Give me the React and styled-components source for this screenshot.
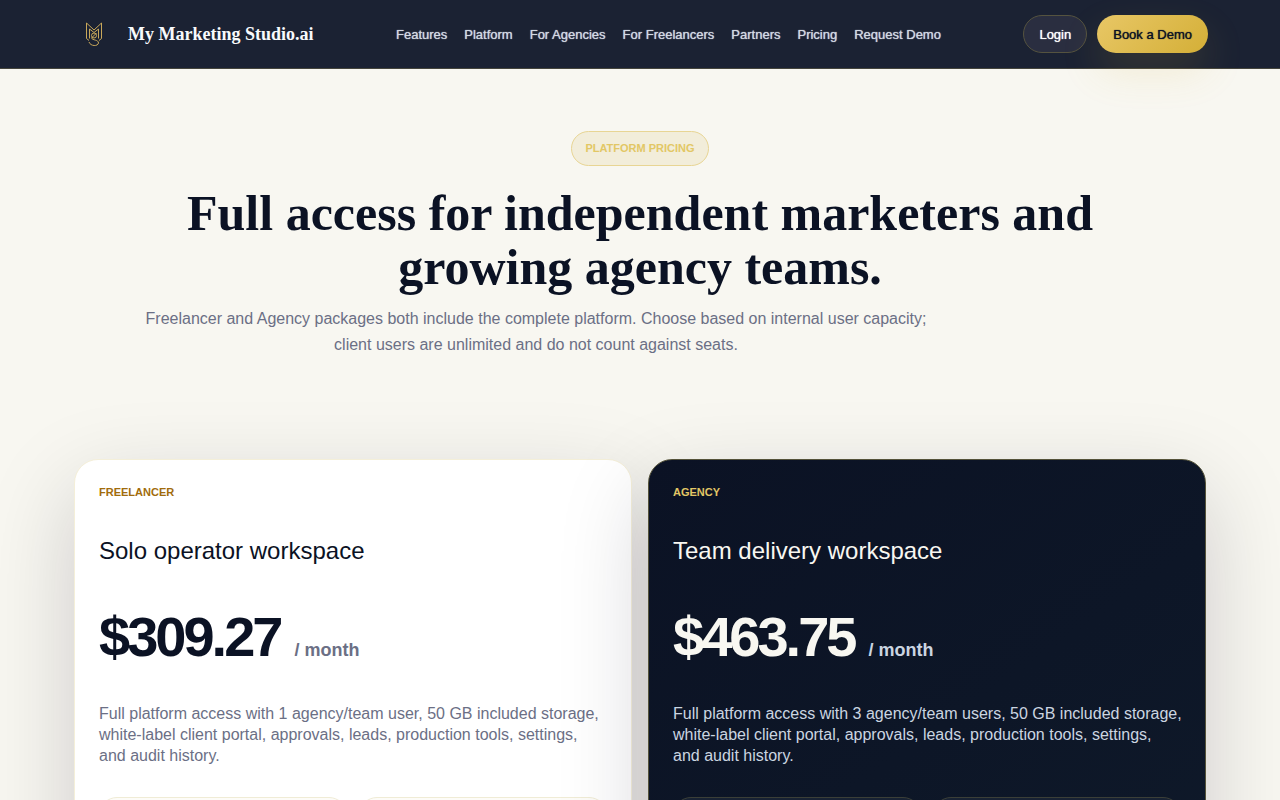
import React from "react";
import styled, { createGlobalStyle } from "styled-components";

const links = [
	"Features",
	"Platform",
	"For Agencies",
	"For Freelancers",
	"Partners",
	"Pricing",
	"Request Demo",
];

const plans = [
	{
		name: "Freelancer",
		title: "Solo operator workspace",
		price: "$309.27",
		text: "Full platform access with 1 agency/team user, 50 GB included storage, white-label client portal, approvals, leads, production tools, settings,",
	},
	{
		name: "Agency",
		title: "Team delivery workspace",
		price: "$463.75",
		text: "Full platform access with 3 agency/team users, 50 GB included storage, white-label client portal, approvals, leads, production tools, settings,",
		dark: true,
	},
];

function Logo() {
	return (
		<LogoSvg viewBox="0 0 44 44" aria-hidden="true">
			<path d="M14.5 26.5 V11 L22 18 L29.5 11 V26.5 L27 28.5" />
			<path d="M14.5 26.5 L17 28.5" />
			<path d="M17.5 26.5 V17 L22 20.5 L26.5 17 V26.5" />
			<circle cx="22" cy="23.5" r="2.5" />
			<path d="M24.5 21 L19.5 26 C20.5 28.5 26.5 27.5 26.5 31 C26 34.5 18.5 34.5 17 30" />
		</LogoSvg>
	);
}

function Plan({ plan }) {
	return (
		<Card $dark={plan.dark}>
			<PlanName $dark={plan.dark}>{plan.name}</PlanName>
			<PlanTitle>{plan.title}</PlanTitle>
			<Price>
				{plan.price}
				<Period $dark={plan.dark}>/ month</Period>
			</Price>
			<PlanText $dark={plan.dark}>
				{plan.text} <NoWrap>and audit history.</NoWrap>
			</PlanText>
			<Stats>
				<Stat $dark={plan.dark} />
				<Stat $dark={plan.dark} />
			</Stats>
		</Card>
	);
}

function App() {
	return (
		<>
			<GlobalStyle />
			<Header>
				<HeaderInner>
					<Brand href="#">
						<Logo />
						My Marketing Studio.ai
					</Brand>
					<Nav>
						{links.map((link) => (
							<NavLink href="#" key={link}>
								{link}
							</NavLink>
						))}
					</Nav>
					<Actions>
						<Button type="button">Login</Button>
						<Button type="button" $gold>
							Book a Demo
						</Button>
					</Actions>
				</HeaderInner>
			</Header>
			<main>
				<Hero>
					<Badge>Platform Pricing</Badge>
					<HeroTitle>
						Full access for independent marketers and growing agency teams.
					</HeroTitle>
					<HeroText>
						Freelancer and Agency packages both include the complete platform.
						Choose based on internal user capacity; client users are unlimited
						and do not count against seats.
					</HeroText>
				</Hero>
				<Plans>
					{plans.map((plan) => (
						<Plan plan={plan} key={plan.name} />
					))}
				</Plans>
			</main>
		</>
	);
}

const GlobalStyle = createGlobalStyle`
	* {
		box-sizing: border-box;
		margin: 0;
	}

	body {
		background: #f8f7f1;
		color: #0b1224;
		font-family: "Liberation Sans", Arial, sans-serif;
		font-size: 16px;
		overflow-x: hidden;
	}
`;

const Header = styled.header`
	position: relative;
	z-index: 1;
	background: #1b2233;
	border-bottom: 1px solid #45453c;
`;

const HeaderInner = styled.div`
	display: flex;
	align-items: center;
	justify-content: space-between;
	max-width: 1136px;
	min-height: 68px;
	margin: 0 auto;
`;

const Brand = styled.a`
	display: flex;
	align-items: center;
	gap: 12px;
	color: #f8fafc;
	font-family: "Liberation Serif", "Times New Roman", serif;
	font-size: 18px;
	font-weight: 700;
	text-decoration: none;
	white-space: nowrap;
`;

const LogoSvg = styled.svg`
	width: 44px;
	height: 44px;
	fill: none;
	stroke: #c9a85a;
	stroke-linejoin: round;
`;

const Nav = styled.nav`
	display: flex;
	gap: 17px;
`;

const NavLink = styled.a`
	color: #d3d9e4;
	font-size: 13px;
	text-decoration: none;
	text-shadow: 0 0 1px currentColor;
	white-space: nowrap;
`;

const Actions = styled.div`
	display: flex;
	gap: 10px;
`;

const Button = styled.button`
	height: 38px;
	padding: 0 15px;
	border: 1px solid ${({ $gold }) => ($gold ? "transparent" : "#55533f")};
	border-radius: 19px;
	background: ${({ $gold }) =>
		$gold
			? "linear-gradient(135deg, #e8c766, #d4af37) border-box"
			: "#2a2e40"};
	box-shadow: ${({ $gold }) =>
		$gold ? "0 18px 40px rgba(212, 175, 55, 0.16)" : "none"};
	color: ${({ $gold }) => ($gold ? "#0b1224" : "#ffffff")};
	font-family: inherit;
	font-size: 13px;
	text-shadow: 0 0 1px currentColor;
	white-space: nowrap;
	cursor: pointer;
`;

const Hero = styled.section`
	display: flex;
	flex-direction: column;
	align-items: center;
	max-width: 992px;
	margin: 0 auto;
	padding: 62px 0 101px;
	text-align: center;
`;

const Badge = styled.span`
	padding: 0 13px;
	border: 1px solid #e8d594;
	border-radius: 18px;
	background: #f2edda;
	color: #e2c765;
	font-size: 11px;
	font-weight: 700;
	line-height: 33px;
	text-transform: uppercase;
`;

const HeroTitle = styled.h1`
	margin-top: 20px;
	font-family: "Liberation Serif", "Times New Roman", serif;
	font-size: 50px;
	line-height: 54px;
`;

const HeroText = styled.p`
	align-self: flex-start;
	max-width: 784px;
	margin-top: 12px;
	color: #6b6f85;
	line-height: 26px;
`;

const Plans = styled.section`
	display: grid;
	grid-template-columns: 1fr 1fr;
	gap: 16px;
	max-width: 1132px;
	margin: 0 auto;
	padding-bottom: 80px;
`;

const Card = styled.article`
	min-height: 560px;
	padding: 24px;
	border: 1px solid ${({ $dark }) => ($dark ? "#55533a" : "#f4efd9")};
	border-radius: 24px;
	background: ${({ $dark }) =>
		$dark ? "linear-gradient(145deg, #0b1224, #0f1a2a)" : "#ffffff"};
	box-shadow: 0 30px 90px rgba(16, 12, 32, 0.18);
	color: ${({ $dark }) => ($dark ? "#f8f7f1" : "#0b1224")};
`;

const PlanName = styled.p`
	color: ${({ $dark }) => ($dark ? "#e2c765" : "#a16c0c")};
	font-size: 11px;
	font-weight: 700;
	line-height: 16px;
	text-transform: uppercase;
`;

const PlanTitle = styled.h2`
	margin-top: 35px;
	font-size: 24px;
	font-weight: 400;
	line-height: 32px;
`;

const Price = styled.p`
	margin-top: 42px;
	font-size: 56px;
	font-weight: 700;
	letter-spacing: -3px;
	line-height: 56px;
`;

const Period = styled.span`
	margin-left: 14px;
	color: ${({ $dark }) => ($dark ? "#cbd5e1" : "#6b6f85")};
	font-size: 18px;
	letter-spacing: 0;
`;

const PlanText = styled.p`
	margin: 25px -4px 0 0;
	color: ${({ $dark }) => ($dark ? "#cbd5e1" : "#6b6f85")};
	line-height: 21px;
`;

const NoWrap = styled.span`
	white-space: nowrap;
`;

const Stats = styled.div`
	display: grid;
	grid-template-columns: 1fr 1fr;
	gap: 12px;
	margin-top: 31px;
`;

const Stat = styled.div`
	min-height: 84px;
	border: 1px solid ${({ $dark }) => ($dark ? "#3b3f38" : "#f0ecd6")};
	border-radius: 18px;
	background: ${({ $dark }) => ($dark ? "#182233" : "#fdfcf8")};
`;

export default App;
